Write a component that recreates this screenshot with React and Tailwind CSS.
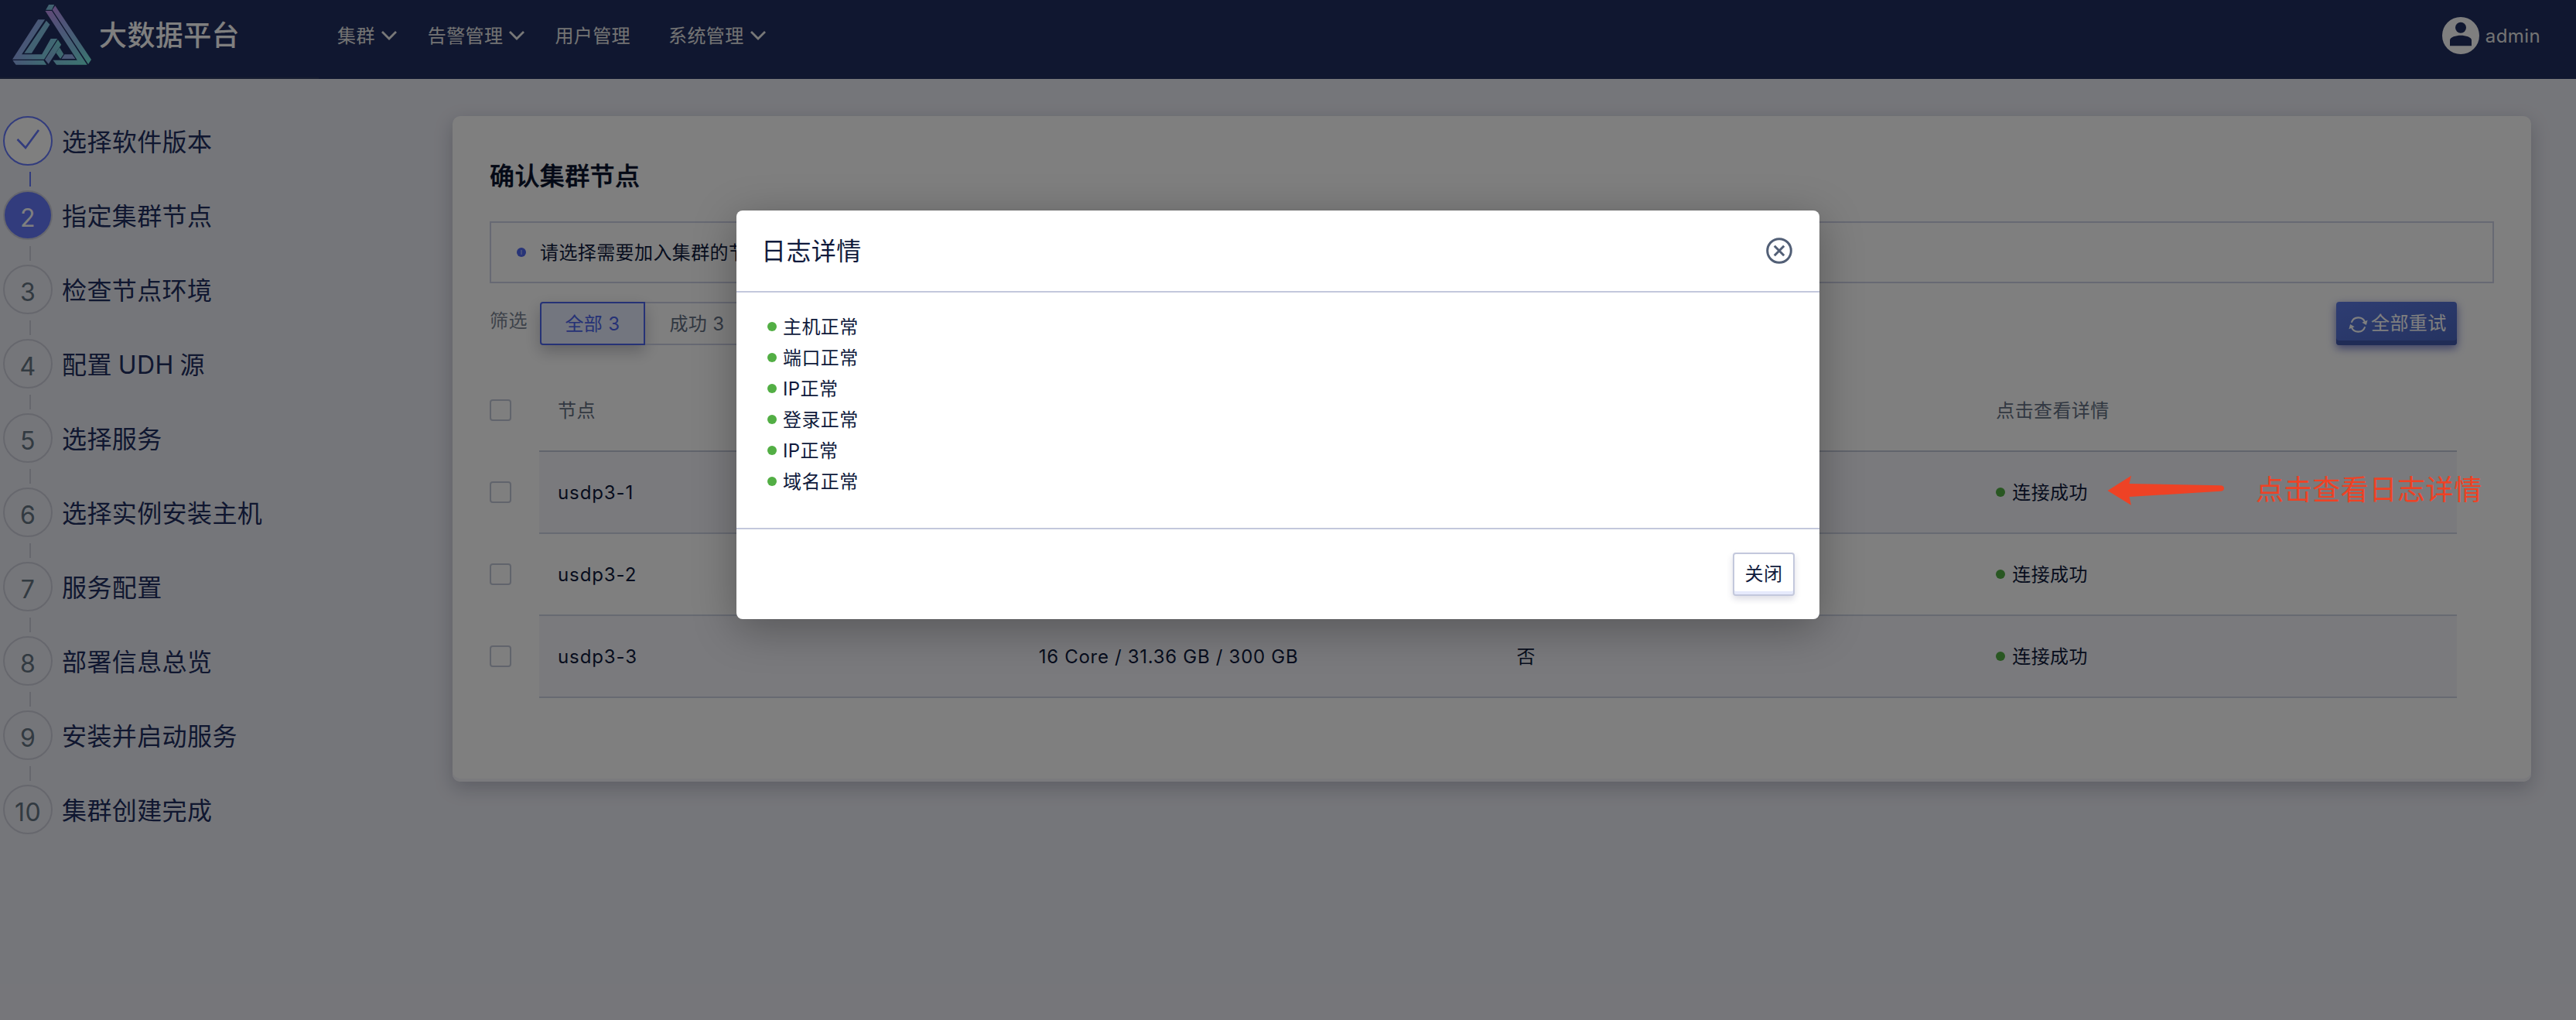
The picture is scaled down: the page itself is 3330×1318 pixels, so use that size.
import React from "react";

const steps = [
  "选择软件版本",
  "指定集群节点",
  "检查节点环境",
  "配置 UDH 源",
  "选择服务",
  "选择实例安装主机",
  "服务配置",
  "部署信息总览",
  "安装并启动服务",
  "集群创建完成",
];

const hosts = ["usdp3-1", "usdp3-2", "usdp3-3"];
const logs = ["主机正常", "端口正常", "IP正常", "登录正常", "IP正常", "域名正常"];

function Logo() {
  return (
    <svg className="h-[78px] w-[102px] shrink-0" viewBox="45 18 286 234" preserveAspectRatio="none">
      <defs>
        <linearGradient id="left" gradientUnits="userSpaceOnUse" x1="70" y1="160" x2="210" y2="240">
          <stop offset="0" stopColor="#98a6f0" />
          <stop offset="0.25" stopColor="#8cb4ea" />
          <stop offset="1" stopColor="#78e6e4" />
        </linearGradient>
        <linearGradient id="right" gradientUnits="userSpaceOnUse" x1="180" y1="40" x2="310" y2="250">
          <stop offset="0" stopColor="#be94ee" />
          <stop offset="0.3" stopColor="#9caaf0" />
          <stop offset="0.7" stopColor="#84c8e6" />
          <stop offset="1" stopColor="#78ece0" />
        </linearGradient>
        <linearGradient id="bar" gradientUnits="userSpaceOnUse" x1="222" y1="155" x2="165" y2="248">
          <stop offset="0" stopColor="#78e0dc" />
          <stop offset="1" stopColor="#90a8e8" />
        </linearGradient>
      </defs>
      <polygon fill="#82c4e0" points="177,18 197,18 188,38 166,38" />
      <polygon fill="url(#right)" points="164,42 188,42 316,251 205,251 192,233 280,233" />
      <polygon fill="url(#right)" points="190,38 200,22 331,231 320,249" />
      <polygon fill="url(#left)" points="138,76 163,76 79,211 152,211 184,150 208,150 160,230 45,230" />
      <polygon fill="#84c2e4" points="168,80 181,95 115,206 88,206" />
      <polygon fill="url(#left)" points="46,234 158,234 169,251 58,251" />
      <polygon fill="url(#bar)" points="210,154 222,173 176,248 163,231" />
      <polygon fill="#7cd0de" points="216,184 231,210 219,228 203,205" />
      <polygon fill="#94aeea" points="234,211 262,211 273,228 223,228" />
    </svg>
  );
}

function Chevron() {
  return (
    <svg className="h-3 w-5" viewBox="0 0 20 12" fill="none" stroke="#f0f0f0" strokeWidth="2.8">
      <path d="M1 1l9 9 9-9" />
    </svg>
  );
}

function NavItem({ label, menu }) {
  return (
    <div className="flex items-center gap-2">
      <span className="pt-0.5">{label}</span>
      {menu && <Chevron />}
    </div>
  );
}

function Header() {
  return (
    <header className="flex h-[102px] bg-[#202e60] text-[24px] leading-none tracking-[0.4px] text-[#e6e6e6]">
      <div className="flex h-[102px] w-[412px] items-start border-b-2 border-[#2e3a62] pl-4 pt-[6px]">
        <Logo />
        <span className="ml-[10px] mt-[21px] text-[36px] font-medium leading-[38px] text-white">大数据平台</span>
      </div>
      <nav className="flex h-[92px] items-center pl-6">
        <NavItem label="集群" menu />
        <div className="w-10" />
        <NavItem label="告警管理" menu />
        <div className="w-[39px]" />
        <NavItem label="用户管理" />
        <div className="w-[49px]" />
        <NavItem label="系统管理" menu />
      </nav>
      <div className="ml-auto flex h-[92px] items-center gap-2 pr-[46px]">
        <svg className="size-12" viewBox="0 0 48 48">
          <circle cx="24" cy="24" r="24" fill="#fff" />
          <circle cx="24" cy="13.7" r="7" fill="#202e60" />
          <path d="M10 37.3V30c0-4 8-6.2 14-6.2S38 26 38 30v7.3z" fill="#202e60" />
        </svg>
        <span className="pt-0.5">admin</span>
      </div>
    </header>
  );
}

function StepMark({ index }) {
  if (index === 0)
    return (
      <div className="flex size-16 items-center justify-center rounded-full border-2 border-[#6478fa] bg-white">
        <svg className="size-8" viewBox="0 0 32 32" fill="none" stroke="#6478fa" strokeWidth="2.6">
          <path d="M2.5 14l10.5 11L30 2" />
        </svg>
      </div>
    );
  if (index === 1)
    return (
      <div className="flex size-16 items-center justify-center rounded-full border-2 border-[#cdcfdc] bg-[#6478fa] pt-2 text-white">
        2
      </div>
    );
  return (
    <div className="flex size-16 items-center justify-center rounded-full border-2 border-[#cdcfdb] pt-2 text-[#647482]">
      {index + 1}
    </div>
  );
}

function Steps() {
  return (
    <aside className="w-[585px] shrink-0 pl-1 pt-12 text-[32px] leading-none tracking-[0.4px]">
      {steps.map((label, i) => (
        <div key={label} className="h-24">
          <div className="flex items-center gap-3">
            <StepMark index={i} />
            <span className="pt-[3px] text-[#202e60] [word-spacing:-1.5px]">{label}</span>
          </div>
          {i < steps.length - 1 && (
            <div className={i === 0 ? "ml-[34px] mt-2 h-[19px] w-0.5 bg-[#6478fa]" : "ml-[34px] mt-2 h-[19px] w-0.5 bg-[#cdcfdb]"} />
          )}
        </div>
      ))}
    </aside>
  );
}

function Checkbox() {
  return <div className="size-7 rounded-[4px] border-2 border-[#c3c8d8]" />;
}

function Table() {
  return (
    <div className="mt-8 flex">
      <div className="w-16 shrink-0">
        {[0, 1, 2, 3].map((i) => (
          <div key={i} className="flex h-[106px] items-center pb-0.5">
            <Checkbox />
          </div>
        ))}
      </div>
      <div className="w-[2479px]">
        <div className="grid h-[106px] grid-cols-4 items-center border-b-2 border-[#c3c8d8] pt-0.5 text-[#647084]">
          <div className="pl-6">节点</div>
          <div className="pl-6">配置</div>
          <div className="pl-6">是否已使用</div>
          <div className="pl-6">点击查看详情</div>
        </div>
        {hosts.map((host, i) => (
          <div
            key={host}
            className={
              i % 2 === 0
                ? "grid h-[106px] grid-cols-4 items-center border-b-2 border-[#cfd4e4] bg-[#f5f5fa]"
                : "grid h-[106px] grid-cols-4 items-center border-b-2 border-[#cfd4e4]"
            }
          >
            <div className="pl-6 pt-0.5 tracking-[0.9px]">{host}</div>
            <div className="pl-[26px] pt-0.5 tracking-[0.7px]">16 Core / 31.36 GB / 300 GB</div>
            <div className="pl-6 pt-0.5">否</div>
            <div className="flex items-center pl-6">
              <span className="mr-[9px] size-3 rounded-full bg-[#52ae44]" />
              <span className="pt-0.5">连接成功</span>
            </div>
          </div>
        ))}
      </div>
    </div>
  );
}

function Card() {
  return (
    <main className="mt-12 h-[860px] w-[2687px] rounded-[10px] bg-white px-12 text-[24px] leading-none tracking-[0.4px] text-[#0f1a3c] shadow-[inset_0_-4px_0_#f5f5fa,0_8px_24px_rgba(15,20,50,0.22)]">
      <h1 className="pt-[60px] text-[32px] font-medium leading-9 text-[#08122c] [-webkit-text-stroke:0.5px_#08122c]">确认集群节点</h1>
      <div className="mt-10 flex h-20 items-center border-2 border-[#cfd2e6] pl-[33px]">
        <span className="flex size-3 items-center justify-center rounded-full bg-[#5068f0]">
          <span className="h-1.5 w-0.5 bg-[#8c9cf8]" />
        </span>
        <span className="ml-[18px] pt-0.5">请选择需要加入集群的节点</span>
      </div>
      <div className="mt-6 flex h-14">
        <span className="mt-[13px] w-[65px] text-[#7c8694]">筛选</span>
        <div className="flex h-14 w-[136px] items-center justify-center rounded-l-[4px] border-2 border-[#4c64ec] bg-[#e6ecff] pt-0.5 text-[#4c64ec] shadow-[0_8px_20px_rgba(20,20,40,0.25)]">
          全部 3
        </div>
        <div className="flex h-14 w-[136px] items-center justify-center border-y-2 border-r-2 border-[#cfd2e6] pt-0.5 text-[#647084]">
          成功 3
        </div>
        <div className="ml-auto mr-12 flex h-14 w-[156px] items-center rounded-[4px] bg-linear-to-br from-[#5c7ae6] to-[#4a66c0] pl-4 text-white shadow-[inset_0_-6px_0_#4058ac,0_4px_12px_rgba(60,70,180,0.7)]">
          <svg className="mr-1 mt-0.5 size-[25px]" viewBox="0 0 24 24" fill="none" stroke="#fff" strokeWidth="2">
            <path d="M3.6 9.4A8.9 8.9 0 0 1 20.4 9M20.4 14.6A8.9 8.9 0 0 1 3.6 15" />
            <path d="M23.6 6.5l-1.6 6-5.4-3.2zM.4 17.5l1.6-6 5.4 3.2z" fill="#fff" stroke="none" />
          </svg>
          全部重试
        </div>
      </div>
      <Table />
    </main>
  );
}

function Annotation() {
  return (
    <div className="absolute left-[2724px] top-[612px] flex h-[42px] items-center text-[#ee4225]">
      <svg className="h-[42px] w-[152px]" viewBox="0 0 152 42" fill="currentColor">
        <path d="M0.5 22L31 2.7 28.5 13 146 15.3Q151 15.5 151 19Q151 22.5 146 22.8L28.5 30 31 40.7z" />
      </svg>
      <span className="ml-10 whitespace-nowrap text-[36px] leading-none tracking-[0.6px]">点击查看日志详情</span>
    </div>
  );
}

function LogDialog() {
  return (
    <section className="absolute left-[952px] top-[272px] flex h-[528px] w-[1400px] flex-col rounded-[8px] bg-white text-[24px] leading-none tracking-[0.4px] text-[#0f1a3c] shadow-[0_12px_56px_rgba(0,0,0,0.3)]">
      <div className="flex h-[106px] items-center justify-between border-b-2 border-[#c3c8dc] pl-8 pr-[35px]">
        <h2 className="pt-0.5 text-[32px]">日志详情</h2>
        <svg className="size-[34px]" viewBox="0 0 34 34" fill="none" stroke="#525f76" strokeWidth="3">
          <circle cx="17" cy="17" r="15.3" />
          <path d="M10.8 10.8l12.4 12.4M23.2 10.8L10.8 23.2" />
        </svg>
      </div>
      <ul className="flex-1 pl-10 pt-6">
        {logs.map((text, i) => (
          <li key={i} className="flex h-10 items-center gap-2">
            <span className="size-3 rounded-full bg-[#52ae44]" />
            <span className="pt-0.5">{text}</span>
          </li>
        ))}
      </ul>
      <div className="flex h-[118px] justify-end border-t-2 border-[#c3c8dc] pr-8 pt-[30px]">
        <button className="flex h-14 w-20 items-center justify-center rounded-[4px] border-2 border-[#c3c8dc] bg-white shadow-[inset_0_-4px_0_#e6eafc,0_4px_8px_rgba(40,40,90,0.16)]">
          关闭
        </button>
      </div>
    </section>
  );
}

export default function App() {
  return (
    <div className="relative h-[1318px] w-[3330px] overflow-hidden bg-[#ebecf4] font-['Inter','Noto_Sans_CJK_SC',sans-serif]">
      <Header />
      <div className="flex items-start">
        <Steps />
        <Card />
      </div>
      <div className="absolute inset-0 bg-black/50" />
      <Annotation />
      <LogDialog />
    </div>
  );
}
